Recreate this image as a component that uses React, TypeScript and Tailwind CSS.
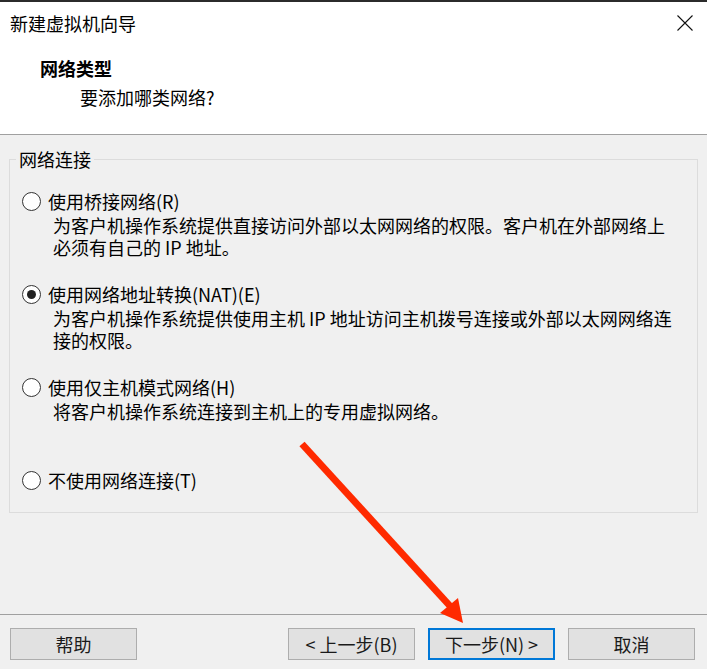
import React from "react";

const cjk = { fontFamily: '"Microsoft YaHei", "Noto Sans CJK SC", "Noto Sans", sans-serif' };

interface OptionProps {
    label: string;
    lines?: string[];
    checked?: boolean;
    className?: string;
}

const Radio = ({ checked }: { checked?: boolean }) => (
    <span className="flex items-center justify-center w-[19px] h-[19px] rounded-full border-[1.5px] border-[#333] bg-white shrink-0">
        {checked && <span className="w-[9px] h-[9px] rounded-full bg-[#222]" />}
    </span>
);

const Option = ({ label, lines = [], checked, className = "" }: OptionProps) => (
    <div className={className}>
        <div className="flex items-center h-[22px] pl-[12px]">
            <Radio checked={checked} />
            <span className="ml-[7px] leading-[22px] whitespace-nowrap">{label}</span>
        </div>
        {lines.length > 0 && (
            <div className="mt-[2px] pl-[43px]">
                {lines.map((l) => (
                    <div key={l} className="leading-[22px] whitespace-nowrap">
                        {l}
                    </div>
                ))}
            </div>
        )}
    </div>
);

const Button = ({ children, primary }: { children: React.ReactNode; primary?: boolean }) => (
    <button
        className={`w-[127px] h-[32px] bg-[#e1e1e1] text-[18px] leading-[22px] text-[#1a1a1a] flex items-center justify-center ${
            primary ? "border-2 border-[#0078d7]" : "border border-[#adadad]"
        }`}
    >
        {children}
    </button>
);

export default function App() {
    return (
        <div
            className="relative w-[707px] h-[669px] bg-[#f0f0f0] text-black text-[18px] flex flex-col overflow-hidden"
            style={cjk}
        >
            {/* HEADER */}
            <div className="h-[135px] bg-white border-t-2 border-b border-t-[#2b2b2b] border-b-[#a0a0a0]">
                <div className="h-[41px] flex items-center justify-between pl-[10px] pr-[14px]">
                    <span className="leading-[22px]">新建虚拟机向导</span>
                    <svg width="16" height="16" viewBox="0 0 16 16">
                        <path d="M0.5 0.5 L15.5 15.5 M15.5 0.5 L0.5 15.5" stroke="#111" strokeWidth="1.1" fill="none" />
                    </svg>
                </div>
                <div className="mt-[14px] pl-[40px] font-bold leading-[22px]">网络类型</div>
                <div className="mt-[7px] pl-[80px] leading-[22px]">要添加哪类网络?</div>
            </div>

            {/* BODY */}
            <fieldset className="mt-[13px] mx-[9px] h-[365px] border border-[#dcdcdc] p-0">
                <legend className="ml-[6px] px-[3px] leading-[22px]">网络连接</legend>
                <Option
                    className="mt-[20px]"
                    label="使用桥接网络(R)"
                    lines={["为客户机操作系统提供直接访问外部以太网网络的权限。客户机在外部网络上", "必须有自己的 IP 地址。"]}
                />
                <Option
                    className="mt-[25px]"
                    checked
                    label="使用网络地址转换(NAT)(E)"
                    lines={["为客户机操作系统提供使用主机 IP 地址访问主机拨号连接或外部以太网网络连", "接的权限。"]}
                />
                <Option
                    className="mt-[25px]"
                    label="使用仅主机模式网络(H)"
                    lines={["将客户机操作系统连接到主机上的专用虚拟网络。"]}
                />
                <Option className="mt-[47px]" label="不使用网络连接(T)" />
            </fieldset>

            {/* FOOTER */}
            <div className="mt-auto border-t border-[#a0a0a0] h-[55px] pt-[13px] pl-[10px] pr-[12px] flex items-start">
                <Button>帮助</Button>
                <div className="flex-1" />
                <div className="flex gap-[13px]">
                    <Button>&lt; 上一步(B)</Button>
                    <Button primary>下一步(N) &gt;</Button>
                    <Button>取消</Button>
                </div>
            </div>

            {/* red annotation arrow */}
            <svg className="absolute inset-0 pointer-events-none" width="707" height="669" viewBox="0 0 707 669">
                <line x1="302" y1="444" x2="450" y2="606" stroke="#ff2a00" strokeWidth="7" />
                <polygon points="463,623 440,613 458,598" fill="#ff2a00" />
            </svg>
        </div>
    );
}
